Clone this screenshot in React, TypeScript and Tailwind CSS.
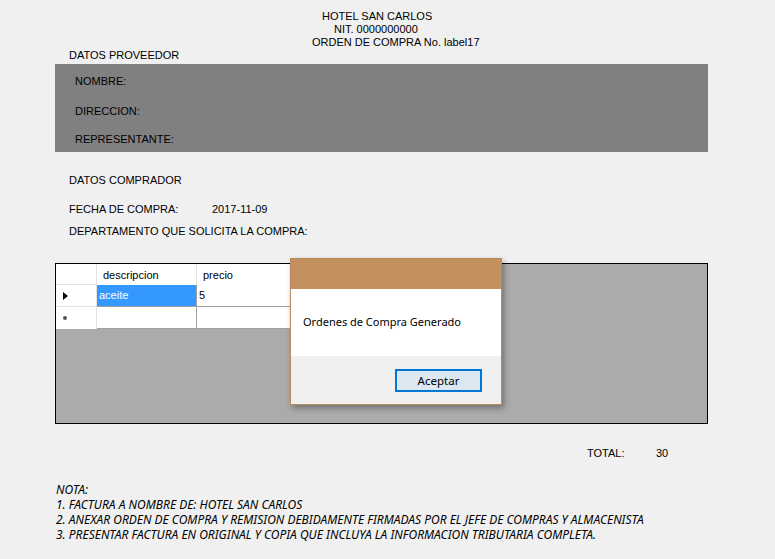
import React from "react";

const sans = { fontFamily: '"Liberation Sans", Arial, sans-serif' };

const Row = ({ children, className = "" }: { children: React.ReactNode; className?: string }) => (
  <div className={"flex " + className}>{children}</div>
);

const DataGrid = () => {
  return (
    <div className="ml-[55px] w-[653px] h-[161px] border border-black bg-[#ababab] flex flex-col">
      <Row>
        <div className="w-[41px] h-[21px] bg-white border-r border-b border-[#e3e3e3]" />
        <div className="w-[100px] h-[21px] bg-white border-r border-[#e3e3e3] pl-[6px] leading-[22px]">
          descripcion
        </div>
        <div className="w-[100px] h-[21px] bg-white pl-[6px] leading-[22px]">precio</div>
      </Row>
      <Row>
        <div className="w-[41px] h-[22px] bg-white border-r border-b border-[#e3e3e3] flex items-center pl-[7px]">
          <svg width="5" height="8" viewBox="0 0 5 8">
            <path d="M0 0 L5 4 L0 8 Z" fill="#000" />
          </svg>
        </div>
        <div className="w-[100px] h-[22px] bg-[#3399ff] text-white border-r border-b border-[#a0a0a0] pl-[2px] leading-[21px]">
          aceite
        </div>
        <div className="w-[100px] h-[22px] bg-white border-b border-[#a0a0a0] pl-[2px] leading-[21px]">5</div>
      </Row>
      <Row>
        <div className="w-[41px] h-[22px] bg-white border-r border-[#e3e3e3] flex items-center pl-[7px]">
          <span className="block w-[4px] h-[4px] rounded-full bg-[#555]" />
        </div>
        <div className="w-[100px] h-[22px] bg-white border-r border-b border-[#a0a0a0]" />
        <div className="w-[100px] h-[22px] bg-white border-b border-[#a0a0a0]" />
      </Row>
    </div>
  );
};

const MessageBox = () => (
  <div
    className="absolute left-[290px] top-[258px] w-[212px] h-[147px] border border-[#b88a5c] bg-[#f0f0f0] flex flex-col shadow-[2px_3px_6px_rgba(0,0,0,0.35)]"
    style={{ fontFamily: '"Noto Sans", "Open Sans", sans-serif' }}
  >
    <div className="h-[30px] bg-[#c3905f]" />
    <div className="h-[67px] bg-white pl-[12px] flex items-center text-[11px] text-black">
      Ordenes de Compra Generado
    </div>
    <div className="flex-1 flex justify-end items-start pt-[13px] pr-[19px]">
      <button className="w-[87px] h-[23px] border-2 border-[#0078d7] bg-[#dce7f2] text-[11.5px] text-black leading-[17px]">
        Aceptar
      </button>
    </div>
  </div>
);

export default function App() {
  return (
    <div className="relative w-[775px] h-[559px] bg-[#f0f0f0] text-black text-[11px] overflow-hidden" style={sans}>
      <div className="pt-[10px] leading-[13px]">
        <div className="pl-[322px]">HOTEL SAN CARLOS</div>
        <div className="pl-[334px]">NIT. 0000000000</div>
        <div className="pl-[312px]">ORDEN DE COMPRA No. label17</div>
        <div className="pl-[69px]">DATOS PROVEEDOR</div>
      </div>

      <div className="mt-[2px] ml-[55px] w-[653px] h-[88px] bg-[#808080] pl-[20px] leading-[13px]">
        <div className="pt-[11px]">NOMBRE:</div>
        <div className="mt-[17px]">DIRECCION:</div>
        <div className="mt-[15px]">REPRESENTANTE:</div>
      </div>

      <div className="pl-[69px] leading-[13px]">
        <div className="mt-[22px]">DATOS COMPRADOR</div>
        <div className="mt-[16px] flex">
          <span className="w-[143px]">FECHA DE COMPRA:</span>
          <span>2017-11-09</span>
        </div>
        <div className="mt-[9px]">DEPARTAMENTO QUE SOLICITA LA COMPRA:</div>
      </div>

      <div className="mt-[25px]">
        <DataGrid />
      </div>

      <div className="mt-[23px] pl-[587px] flex leading-[13px]">
        <span className="w-[69px]">TOTAL:</span>
        <span>30</span>
      </div>

      <div
        className="mt-[22px] pl-[56px] italic text-[12px] leading-[15px]"
        style={{ fontFamily: '"Noto Sans", "Open Sans", sans-serif' }}
      >
        <div>NOTA:</div>
        <div>1. FACTURA A NOMBRE DE: HOTEL SAN CARLOS</div>
        <div>2. ANEXAR ORDEN DE COMPRA Y REMISION DEBIDAMENTE FIRMADAS POR EL JEFE DE COMPRAS Y ALMACENISTA</div>
        <div>3. PRESENTAR FACTURA EN ORIGINAL Y COPIA QUE INCLUYA LA INFORMACION TRIBUTARIA COMPLETA.</div>
      </div>

      <MessageBox />
    </div>
  );
}
